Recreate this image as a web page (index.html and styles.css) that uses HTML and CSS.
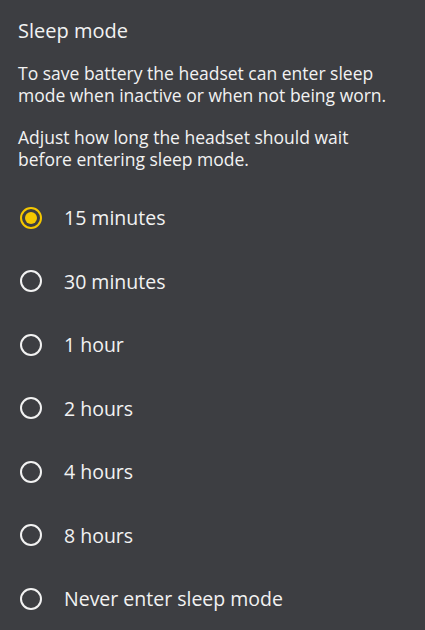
FILE: index.html
```html
<!DOCTYPE html>
<html lang="en">
<head>
  <meta charset="UTF-8" />
  <meta name="viewport" content="width=device-width, initial-scale=1.0" />
  <title>Sleep mode</title>
  <link rel="stylesheet" href="styles.css">
</head>
<body>
  <div class="screen">
    <h1 class="title">Sleep mode</h1>
    <p class="text">To save battery the headset can enter sleep mode when inactive or when not being worn.</p>
    <p class="text">Adjust how long the headset should wait before entering sleep mode.</p>

    <div class="options">
      <label class="option">
        <input type="radio" name="sleep" checked />
        <span class="radio"></span>
        <span class="label">15 minutes</span>
      </label>
      <label class="option">
        <input type="radio" name="sleep" />
        <span class="radio"></span>
        <span class="label">30 minutes</span>
      </label>
      <label class="option">
        <input type="radio" name="sleep" />
        <span class="radio"></span>
        <span class="label">1 hour</span>
      </label>
      <label class="option">
        <input type="radio" name="sleep" />
        <span class="radio"></span>
        <span class="label">2 hours</span>
      </label>
      <label class="option">
        <input type="radio" name="sleep" />
        <span class="radio"></span>
        <span class="label">4 hours</span>
      </label>
      <label class="option">
        <input type="radio" name="sleep" />
        <span class="radio"></span>
        <span class="label">8 hours</span>
      </label>
      <label class="option">
        <input type="radio" name="sleep" />
        <span class="radio"></span>
        <span class="label">Never enter sleep mode</span>
      </label>
    </div>
  </div>
</body>
</html>
```

FILE: styles.css
```css
html, body {
  margin: 0;
  background: #3d3e42;
}
body {
  font-family: 'Open Sans', 'Noto Sans', sans-serif;
  color: #f2f2f2;
}
.screen {
  padding: 18px 30px 0 18px;
  height: 630px;
  box-sizing: border-box;
  overflow: hidden;
}
.title {
  font-size: 20px;
  font-weight: normal;
  line-height: 26px;
  margin: 0 0 18px 0;
}
.text {
  font-size: 17.5px;
  line-height: 22px;
  margin: 0 0 20px 0;
}
.text:last-of-type {
  margin-bottom: 16px;
}
.options {
  margin-top: 0;
}
.option {
  display: flex;
  align-items: center;
  height: 63.5px;
  padding-left: 2px;
  cursor: pointer;
}
.option input {
  display: none;
}
.radio {
  width: 18px;
  height: 18px;
  border: 2.5px solid #f2f2f2;
  border-radius: 50%;
  display: flex;
  align-items: center;
  justify-content: center;
  flex-shrink: 0;
}
.option input:checked + .radio {
  border-color: #f5c800;
}
.option input:checked + .radio::after {
  content: '';
  width: 12px;
  height: 12px;
  border-radius: 50%;
  background: #f5c800;
}
.label {
  font-size: 19.5px;
  margin-left: 22px;
}
```
